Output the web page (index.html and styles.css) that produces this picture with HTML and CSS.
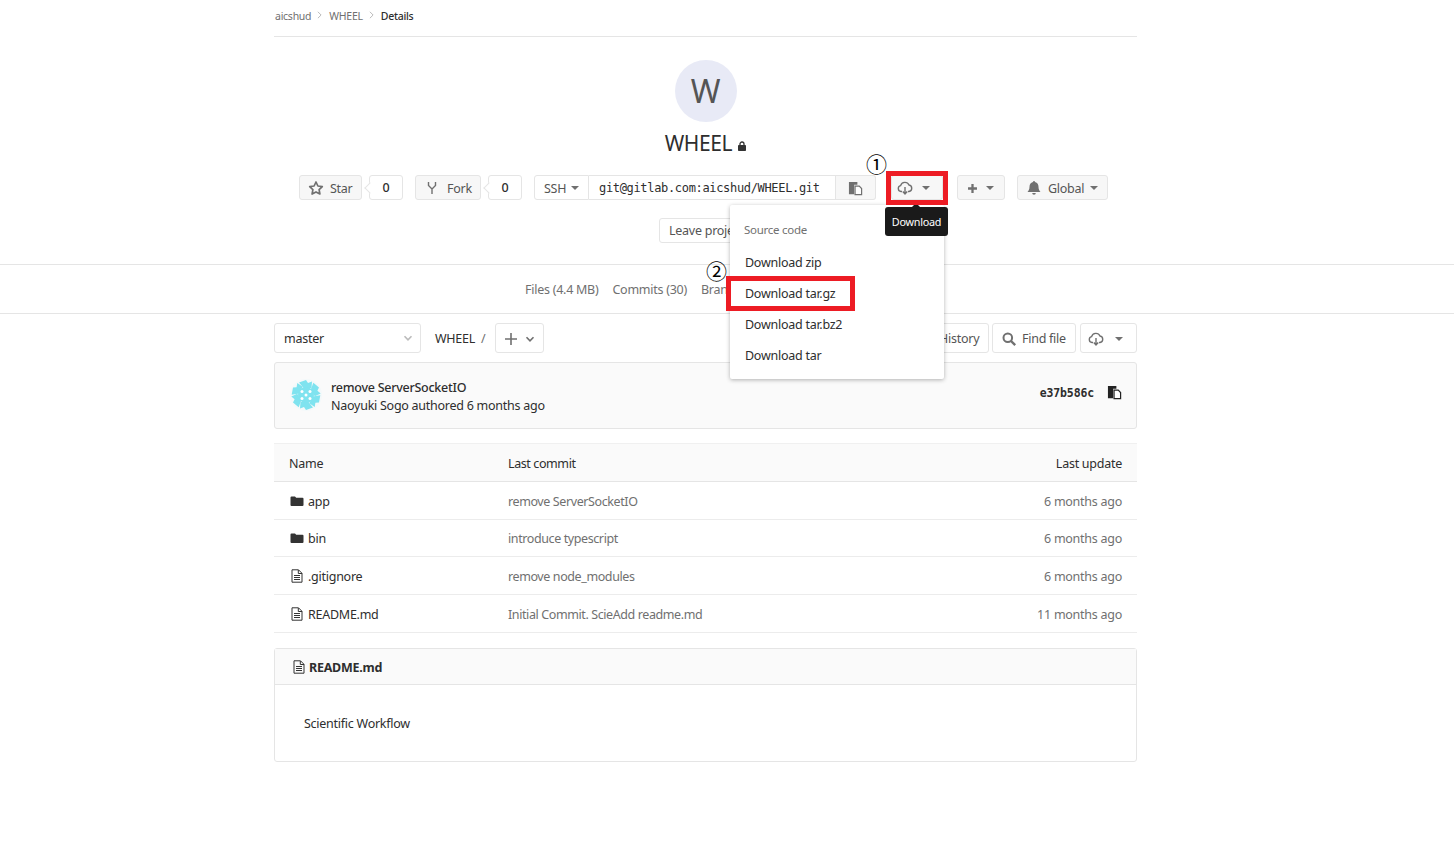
FILE: index.html
```html
<!DOCTYPE html>
<html lang="en">

<head>
    <meta charset="UTF-8">
    <title>WHEEL - Details</title>
    <link rel="stylesheet" href="styles.css">
</head>

<body>

    <svg class="sprite" width="0" height="0">
        <symbol id="i-star" viewBox="0 0 16 16">
            <path d="M8 2l1.900 4 4.400.6-3.200 3 .8 4.400L8 11.900 4.100 14l.8-4.400-3.200-3 4.400-.6z" fill="none" stroke="currentColor" stroke-width="1.700" stroke-linejoin="round"/>
        </symbol>
        <symbol id="i-fork" viewBox="0 0 16 16">
            <path d="M4.500 2v3.500L8 9l3.500-3.500V2M8 9v5" fill="none" stroke="currentColor" stroke-width="1.400"/>
        </symbol>
        <symbol id="i-copy" viewBox="0 0 16 16">
            <path d="M1 1h9v3H6.500v10H1z" fill="currentColor"/>
            <path d="M7.500 5.500h4.500l2.500 2.500v6.500h-7z" fill="#fff" stroke="currentColor" stroke-width="1.300"/>
        </symbol>
        <symbol id="i-cloud" viewBox="0 0 16 16">
            <path d="M5 11.500H4a3 3 0 0 1-.4-5.900A4.500 4.500 0 0 1 12 5a3.300 3.300 0 0 1 0 6.500h-1" fill="none" stroke="currentColor" stroke-width="1.400"/>
            <path d="M8 7v6M5.800 11.500L8 14l2.200-2.500" fill="none" stroke="currentColor" stroke-width="1.400"/>
        </symbol>
        <symbol id="i-plus" viewBox="0 0 16 16">
            <path d="M8 2.500v11M2.500 8h11" fill="none" stroke="currentColor" stroke-width="2.800"/>
        </symbol>
        <symbol id="i-thin-plus" viewBox="0 0 16 16">
            <path d="M8 2v12M2 8h12" fill="none" stroke="currentColor" stroke-width="1.600"/>
        </symbol>
        <symbol id="i-bell" viewBox="0 0 16 16">
            <path d="M8 1a1 1 0 0 1 1 1c2.500.5 3.500 2.500 3.500 4.800 0 2.600.8 3.900 2 5.200h-13c1.200-1.300 2-2.600 2-5.200C3.500 4.500 4.500 2.500 7 2a1 1 0 0 1 1-1zM6.200 13h3.600a1.800 1.800 0 0 1-3.600 0z" fill="currentColor"/>
        </symbol>
        <symbol id="i-search" viewBox="0 0 16 16">
            <circle cx="6.800" cy="6.800" r="4.300" fill="none" stroke="currentColor" stroke-width="2"/>
            <path d="M10 10l4.200 4.200" stroke="currentColor" stroke-width="2.400"/>
        </symbol>
        <symbol id="i-folder" viewBox="0 0 14 14">
            <path d="M1.500 2.500h3.500l1.200 1.300h6.300a1 1 0 0 1 1 1v6.200a1 1 0 0 1-1 1h-11a1 1 0 0 1-1-1V3.500a1 1 0 0 1 1-1z" fill="currentColor"/>
        </symbol>
        <symbol id="i-file" viewBox="0 0 14 14">
            <path d="M2 .8h6.500L12 4.300v8.900H2z" fill="none" stroke="currentColor" stroke-width="1"/>
            <path d="M8.300 1v3.500H12M4 6.500h6M4 8.500h6M4 10.500h6" fill="none" stroke="currentColor" stroke-width="1"/>
        </symbol>
        <symbol id="i-lock" viewBox="0 0 8 10">
            <path d="M2 4.500V3a2 2 0 0 1 4 0v1.500" fill="none" stroke="currentColor" stroke-width="1.300"/>
            <rect y="4" width="8" height="6" rx=".8" fill="currentColor"/>
        </symbol>
        <symbol id="i-chevron" viewBox="0 0 10 10">
            <path d="M1.500 3.200L5 6.800l3.500-3.600" fill="none" stroke="currentColor" stroke-width="1.600"/>
        </symbol>
        <symbol id="i-crumb" viewBox="0 0 6 10">
            <path d="M1 1l4 4-4 4" fill="none" stroke="currentColor" stroke-width="1"/>
        </symbol>
    </svg>

    <div class="container">
        <div class="breadcrumb">
            <a>aicshud</a>
            <svg class="crumb-sep"><use href="#i-crumb"/></svg>
            <a>WHEEL</a>
            <svg class="crumb-sep"><use href="#i-crumb"/></svg>
            <b>Details</b>
        </div>

        <div class="project-head">
            <div class="avatar">W</div>
            <h1>WHEEL <svg class="lock"><use href="#i-lock"/></svg></h1>
        </div>

        <div class="actions">
            <a class="btn star-btn"><svg class="icon"><use href="#i-star"/></svg>Star</a>
            <span class="count">0</span>
            <a class="btn fork-btn"><svg class="icon"><use href="#i-fork"/></svg>Fork</a>
            <span class="count">0</span>
            <div class="clone">
                <a class="btn ssh-btn">SSH<i class="caret"></i></a>
                <span class="clone-url">git@gitlab.com:aicshud/WHEEL.git</span>
                <a class="btn copy-btn"><svg class="icon"><use href="#i-copy"/></svg></a>
            </div>
            <a class="btn download-btn"><svg class="icon"><use href="#i-cloud"/></svg><i class="caret"></i></a>
            <a class="btn plus-btn"><svg class="icon-sm"><use href="#i-plus"/></svg><i class="caret"></i></a>
            <a class="btn global-btn"><svg class="icon"><use href="#i-bell"/></svg>Global<i class="caret"></i></a>
        </div>

        <div class="leave-row">
            <a class="btn leave-btn">Leave project</a>
        </div>
    </div>

    <nav class="project-nav">
        <a>Files (4.4 MB)</a>
        <a>Commits (30)</a>
        <a>Branches (1)</a>
    </nav>

    <div class="container">
        <div class="tree-controls">
            <div class="branch-select">master<svg class="chevron"><use href="#i-chevron"/></svg></div>
            <span class="path">WHEEL</span>
            <span class="path-sep">/</span>
            <a class="btn add-btn"><svg class="icon"><use href="#i-thin-plus"/></svg><svg class="chevron dark"><use href="#i-chevron"/></svg></a>
            <a class="btn history-btn">History</a>
            <a class="btn find-btn"><svg class="icon"><use href="#i-search"/></svg>Find file</a>
            <a class="btn tree-download"><svg class="icon"><use href="#i-cloud"/></svg><i class="caret"></i></a>
        </div>

        <div class="commit-box">
            <svg class="commit-avatar" viewBox="0 0 32 32">
                <circle cx="16" cy="16" r="16" fill="#f4f9fa"/>
                <g fill="#7fe3ef">
                    <path id="blade" d="M14 9.500L9 3.500l7-2.500 2 3 4-1.500-.5 6.500z"/>
                    <use href="#blade" transform="rotate(60 16 16)"/>
                    <use href="#blade" transform="rotate(120 16 16)"/>
                    <use href="#blade" transform="rotate(180 16 16)"/>
                    <use href="#blade" transform="rotate(240 16 16)"/>
                    <use href="#blade" transform="rotate(300 16 16)"/>
                    <circle cx="16" cy="16" r="8"/>
                </g>
                <g fill="#fff">
                    <circle cx="16" cy="16" r="1.500"/>
                    <circle cx="12" cy="12.500" r="1.500"/>
                    <circle cx="20" cy="12.500" r="1.500"/>
                    <circle cx="12" cy="19.500" r="1.500"/>
                    <circle cx="20" cy="19.500" r="1.500"/>
                </g>
            </svg>
            <div class="commit-text">
                <b>remove ServerSocketIO</b>
                <span>Naoyuki Sogo authored 6 months ago</span>
            </div>
            <span class="sha">e37b586c</span>
            <svg class="sha-copy"><use href="#i-copy"/></svg>
        </div>

        <table class="files">
            <thead>
                <tr>
                    <th class="col-name">Name</th>
                    <th class="col-commit">Last commit</th>
                    <th class="col-update">Last update</th>
                </tr>
            </thead>
            <tbody>
                <tr>
                    <td class="col-name"><svg class="file-icon"><use href="#i-folder"/></svg>app</td>
                    <td class="col-commit">remove ServerSocketIO</td>
                    <td class="col-update">6 months ago</td>
                </tr>
                <tr>
                    <td class="col-name"><svg class="file-icon"><use href="#i-folder"/></svg>bin</td>
                    <td class="col-commit">introduce typescript</td>
                    <td class="col-update">6 months ago</td>
                </tr>
                <tr>
                    <td class="col-name"><svg class="file-icon"><use href="#i-file"/></svg>.gitignore</td>
                    <td class="col-commit">remove node_modules</td>
                    <td class="col-update">6 months ago</td>
                </tr>
                <tr>
                    <td class="col-name"><svg class="file-icon"><use href="#i-file"/></svg>README.md</td>
                    <td class="col-commit">Initial Commit. ScieAdd readme.md</td>
                    <td class="col-update">11 months ago</td>
                </tr>
            </tbody>
        </table>

        <div class="readme">
            <div class="readme-head"><svg class="file-icon"><use href="#i-file"/></svg>README.md</div>
            <div class="readme-body">Scientific Workflow</div>
        </div>
    </div>

    <!-- dropdown, tooltip and the annotations sit over the page -->
    <div class="dropdown">
        <div class="dropdown-title">Source code</div>
        <a>Download zip</a>
        <a>Download tar.gz</a>
        <a>Download tar.bz2</a>
        <a>Download tar</a>
    </div>
    <div class="tooltip">Download</div>
    <div class="mark mark-download"></div>
    <div class="mark mark-targz"></div>
    <span class="step step-one">①</span>
    <span class="step step-two">②</span>

</body>

</html>
```

FILE: styles.css
```css
* {
    box-sizing: border-box;
}

body {
    position: relative;
    margin: 0;
    font-family: "Noto Sans", sans-serif;
    font-size: 12.5px;
    letter-spacing: -0.26px;
    color: #2e2e2e;
    background: #fff;
}

.sprite {
    position: absolute;
}

.container {
    width: 863px;
    margin-left: 274px;
}

.breadcrumb {
    display: flex;
    align-items: center;
    height: 37px;
    padding: 0 1px 5px;
    border-bottom: 1px solid #e5e5e5;
    font-size: 10.500px;
    color: #707070;
}

.breadcrumb b {
    font-weight: 500;
    color: #2e2e2e;
}

.crumb-sep {
    width: 5px;
    height: 8px;
    margin: 0 7px 2px 6px;
    color: #aaa;
}

.project-head {
    display: flex;
    flex-direction: column;
    align-items: center;
    padding-top: 23px;
}

.avatar {
    width: 62px;
    height: 62px;
    border-radius: 50%;
    background: #e8eaf6;
    color: #555;
    font-size: 32px;
    line-height: 62px;
    text-align: center;
}

h1 {
    margin: 6px 0 1px;
    font-size: 21px;
    font-weight: 400;
    line-height: 30px;
    letter-spacing: -0.4px;
}

.lock {
    width: 8px;
    height: 10px;
    margin-left: 1px;
    color: #333;
}

.actions {
    display: flex;
    align-items: center;
    height: 25px;
    margin-top: 16px;
    padding-left: 25px;
}

.btn {
    display: flex;
    align-items: center;
    height: 25px;
    padding-top: 1px;
    border: 1px solid #e5e5e5;
    border-radius: 3px;
    background: #f7f7f7;
    color: #555;
    white-space: nowrap;
}

.icon {
    width: 16px;
    height: 16px;
    flex: none;
    color: #707070;
}

.icon-sm {
    width: 13px;
    height: 13px;
    flex: none;
    color: #707070;
}

.caret {
    display: inline-block;
    width: 0;
    height: 0;
    border-left: 4px solid transparent;
    border-right: 4px solid transparent;
    border-top: 4px solid #707070;
}

.star-btn {
    width: 63px;
    padding-left: 8px;
    gap: 6px;
}

.fork-btn {
    width: 66px;
    margin-left: 12px;
    padding-left: 8px;
    gap: 7px;
}

.count {
    position: relative;
    display: flex;
    align-items: center;
    justify-content: center;
    width: 34px;
    height: 25px;
    margin-left: 7px;
    border: 1px solid #e5e5e5;
    border-radius: 3px;
    font-weight: 500;
}

.count::before {
    content: "";
    position: absolute;
    left: -4px;
    top: 8px;
    width: 7px;
    height: 7px;
    border-left: 1px solid #e5e5e5;
    border-bottom: 1px solid #e5e5e5;
    background: #fff;
    transform: rotate(45deg);
}

.clone {
    display: flex;
    margin-left: 12px;
}

.ssh-btn {
    width: 55px;
    padding-left: 9px;
    gap: 5px;
    border-radius: 3px 0 0 3px;
    background: #fff;
}

.clone-url {
    width: 247px;
    height: 25px;
    padding-left: 10px;
    border: 1px solid #e5e5e5;
    border-left: none;
    font-family: "DejaVu Sans Mono", monospace;
    font-size: 12px;
    letter-spacing: -0.33px;
    line-height: 25px;
    color: #2e2e2e;
}

.copy-btn {
    width: 40px;
    justify-content: center;
    border-left: none;
    border-radius: 0 3px 3px 0;
}

.copy-btn .icon {
    width: 15px;
    height: 15px;
}

.download-btn {
    width: 52px;
    margin-left: 15px;
    padding-left: 5px;
    gap: 9px;
}

.plus-btn {
    width: 48px;
    margin-left: 14px;
    padding-left: 8px;
    gap: 7px;
}

.global-btn {
    width: 91px;
    margin-left: 12px;
    padding-left: 8px;
    gap: 6px;
}

.leave-row {
    display: flex;
    height: 64px;
    padding: 18px 0 0 385px;
}

.leave-btn {
    padding: 0 9px;
    background: #fff;
}

.project-nav {
    display: flex;
    gap: 14px;
    height: 50px;
    padding: 0 0 0 525px;
    border-top: 1px solid #e5e5e5;
    border-bottom: 1px solid #e5e5e5;
    line-height: 50px;
    color: #707070;
}

.tree-controls {
    display: flex;
    align-items: center;
    height: 30px;
    margin-top: 9px;
}

.tree-controls .btn {
    height: 30px;
    background: #fff;
}

.branch-select {
    display: flex;
    align-items: center;
    justify-content: space-between;
    width: 147px;
    height: 30px;
    padding: 0 7px 0 9px;
    border: 1px solid #e5e5e5;
    border-radius: 3px;
}

.chevron {
    width: 10px;
    height: 10px;
    color: #bbb;
}

.chevron.dark {
    color: #707070;
}

.path {
    margin-left: 14px;
}

.path-sep {
    margin: 0 10px 0 6px;
    color: #707070;
}

.add-btn {
    width: 49px;
    padding-left: 7px;
    gap: 6px;
}

.history-btn {
    width: 60px;
    margin-left: auto;
    padding-left: 9px;
}

.find-btn {
    width: 84px;
    margin-left: 3px;
    padding-left: 8px;
    gap: 5px;
}

.tree-download {
    width: 57px;
    margin-left: 4px;
    padding-left: 7px;
    gap: 11px;
}

.commit-box {
    display: flex;
    align-items: center;
    height: 67px;
    margin-top: 9px;
    padding: 0 14px 0 15px;
    border: 1px solid #e5e5e5;
    border-radius: 3px;
    background: #fafafa;
}

.commit-avatar {
    width: 32px;
    height: 32px;
    margin-bottom: 2px;
    flex: none;
}

.commit-text {
    display: flex;
    flex-direction: column;
    margin: 2px 0 0 9px;
    line-height: 18px;
}

.commit-text b {
    font-weight: 500;
}

.sha {
    margin: 0 0 6px auto;
    font-family: "DejaVu Sans Mono", monospace;
    font-size: 11.500px;
    font-weight: 700;
    letter-spacing: -0.14px;
}

.sha-copy {
    width: 15px;
    height: 15px;
    margin: 0 0 7px 13px;
    color: #222;
}

.files {
    width: 100%;
    margin-top: 14px;
    border-collapse: collapse;
    table-layout: fixed;
}

.files th {
    height: 38px;
    padding-top: 2px;
    background: #fafafa;
    border-top: 1px solid #f0f0f0;
    border-bottom: 1px solid #e5e5e5;
    font-weight: 400;
    text-align: left;
}

.files td {
    height: 37.700px;
    padding-top: 2.600px;
    border-bottom: 1px solid #ececec;
    color: #707070;
}

.files .col-name {
    width: 233px;
    padding-left: 15px;
    color: #2e2e2e;
}

.files .col-commit {
    width: auto;
    letter-spacing: -0.4px;
}

.files th.col-commit {
    color: #2e2e2e;
}

.files .col-update {
    width: 220px;
    padding-right: 15px;
    text-align: right;
}

.files th.col-update {
    color: #2e2e2e;
}

.file-icon {
    width: 14px;
    height: 14px;
    margin: 0 4px 0 1px;
    vertical-align: -2px;
    color: #333;
}

.readme {
    height: 114px;
    margin-top: 15px;
    border: 1px solid #e5e5e5;
    border-radius: 3px;
}

.readme-head {
    height: 36px;
    padding-left: 16px;
    border-bottom: 1px solid #e5e5e5;
    background: #fafafa;
    font-weight: 700;
    line-height: 37px;
}

.readme-head .file-icon {
    margin-right: 3px;
}

.readme-body {
    padding: 30px 0 0 29px;
}

.dropdown {
    position: absolute;
    left: 730px;
    top: 205px;
    width: 214px;
    height: 174px;
    padding-top: 8px;
    border-radius: 2px;
    background: #fff;
    box-shadow: 0 1px 4px rgba(0, 0, 0, 0.3);
}

.dropdown-title {
    height: 34px;
    padding-left: 14px;
    font-size: 11.500px;
    line-height: 33px;
    color: #707070;
}

.dropdown a {
    display: block;
    height: 31px;
    padding-left: 15px;
    line-height: 31px;
}

.tooltip {
    position: absolute;
    left: 885px;
    top: 207px;
    width: 63px;
    height: 29px;
    border-radius: 3px;
    background: #1a1a1a;
    color: #fff;
    font-size: 10.800px;
    line-height: 29px;
    text-align: center;
}

.tooltip::before {
    content: "";
    position: absolute;
    left: 27px;
    top: -4px;
    border-left: 4px solid transparent;
    border-right: 4px solid transparent;
    border-bottom: 4px solid #1a1a1a;
}

.mark {
    position: absolute;
    border: 5px solid #ed1c24;
}

.mark-download {
    left: 886px;
    top: 171px;
    width: 62px;
    height: 34px;
}

.mark-targz {
    left: 726px;
    top: 276px;
    width: 129px;
    height: 35px;
}

.step {
    position: absolute;
    font-family: "Noto Sans CJK JP", sans-serif;
    font-size: 21px;
    line-height: 21px;
    letter-spacing: 0;
    color: #000;
}

.step-one {
    left: 866px;
    top: 153px;
}

.step-two {
    left: 706px;
    top: 260px;
}
```
